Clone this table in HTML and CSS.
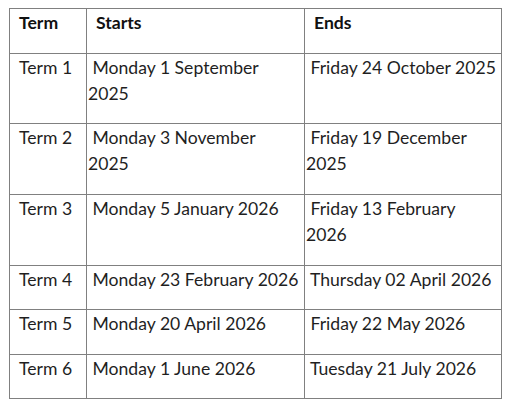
FILE: index.html
```html
<!DOCTYPE html>
<html>
<head>
<meta charset="utf-8">
<link rel="stylesheet" href="styles.css">
</head>
<body>
<div class="wrap">
<table class="terms">
  <colgroup>
    <col class="c1">
    <col class="c2">
    <col class="c3">
  </colgroup>
  <thead>
    <tr>
      <th>Term</th>
      <th>Starts</th>
      <th>Ends</th>
    </tr>
  </thead>
  <tbody>
    <tr>
      <td class="name">Term 1</td>
      <td class="date">&nbsp;Monday 1 September 2025</td>
      <td class="date">&nbsp;Friday 24 October 2025</td>
    </tr>
    <tr>
      <td class="name">Term 2</td>
      <td class="date">&nbsp;Monday 3 November 2025</td>
      <td class="date">&nbsp;Friday 19 December 2025</td>
    </tr>
    <tr>
      <td class="name">Term 3</td>
      <td class="date">&nbsp;Monday 5 January 2026</td>
      <td class="date">&nbsp;Friday 13 February 2026</td>
    </tr>
    <tr>
      <td class="name">Term 4</td>
      <td class="date">&nbsp;Monday 23 February 2026</td>
      <td class="date">&nbsp;Thursday 02 April 2026</td>
    </tr>
    <tr>
      <td class="name">Term 5</td>
      <td class="date">&nbsp;Monday 20 April 2026</td>
      <td class="date">&nbsp;Friday 22 May 2026</td>
    </tr>
    <tr>
      <td class="name">Term 6</td>
      <td class="date">&nbsp;Monday 1 June 2026</td>
      <td class="date">&nbsp;Tuesday 21 July 2026</td>
    </tr>
  </tbody>
</table>
</div>
</body>
</html>
```

FILE: styles.css
```css
html, body {
  margin: 0;
  padding: 0;
  background: #ffffff;
}

.wrap {
  padding: 8px 0 0 9px;
}

.terms {
  border-collapse: collapse;
  table-layout: fixed;
  width: 492px;
  font-family: Lato, "Open Sans", sans-serif;
  font-size: 17.6px;
  line-height: 26.2px;
  color: #1f1f1f;
}

.c1 { width: 77px; }
.c2 { width: 218px; }
.c3 { width: 197px; }

.terms th,
.terms td {
  border: 1px solid #808080;
  vertical-align: top;
  text-align: left;
  padding: 1px 4px 16.3px 9px;
}

.terms th {
  font-weight: bold;
  color: #111111;
}

.terms td.date {
  padding-left: 1px;
  padding-right: 4px;
}
```
